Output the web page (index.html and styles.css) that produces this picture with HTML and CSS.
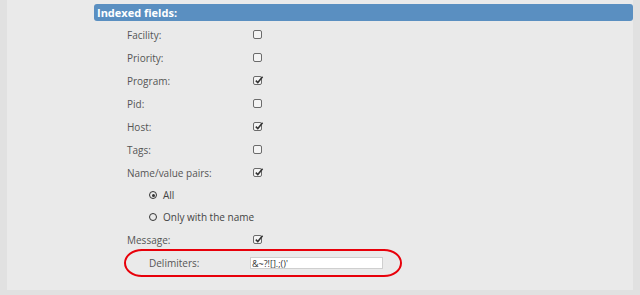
FILE: index.html
```html
<!DOCTYPE html>
<html lang="en">
<head>
    <meta charset="UTF-8">
    <title>Indexed fields</title>
    <link rel="stylesheet" href="styles.css">
</head>
<body>
    <div class="panel">
        <div class="section-title">Indexed fields:</div>

        <div class="fields">
            <div class="field-row">
                <span class="field-label">Facility:</span>
                <span class="check"></span>
            </div>
            <div class="field-row">
                <span class="field-label">Priority:</span>
                <span class="check"></span>
            </div>
            <div class="field-row">
                <span class="field-label">Program:</span>
                <span class="check checked"><svg viewBox="0 0 9 9"><path d="M1.8 4.6 L3.8 6.6 L8.6 0.8" /></svg></span>
            </div>
            <div class="field-row">
                <span class="field-label">Pid:</span>
                <span class="check"></span>
            </div>
            <div class="field-row">
                <span class="field-label">Host:</span>
                <span class="check checked"><svg viewBox="0 0 9 9"><path d="M1.8 4.6 L3.8 6.6 L8.6 0.8" /></svg></span>
            </div>
            <div class="field-row">
                <span class="field-label">Tags:</span>
                <span class="check"></span>
            </div>
            <div class="field-row">
                <span class="field-label">Name/value pairs:</span>
                <span class="check checked"><svg viewBox="0 0 9 9"><path d="M1.8 4.6 L3.8 6.6 L8.6 0.8" /></svg></span>
            </div>
            <div class="radio-row">
                <span class="radio selected"></span>
                <span>All</span>
            </div>
            <div class="radio-row">
                <span class="radio"></span>
                <span>Only with the name</span>
            </div>
            <div class="field-row">
                <span class="field-label">Message:</span>
                <span class="check checked"><svg viewBox="0 0 9 9"><path d="M1.8 4.6 L3.8 6.6 L8.6 0.8" /></svg></span>
            </div>

            <!-- highlighted row -->
            <div class="delimiters">
                <span class="field-label">Delimiters:</span>
                <input class="text-input" type="text" value="&amp;~?![].;()'">
            </div>
        </div>
    </div>
</body>
</html>
```

FILE: styles.css
```css
/* Reset */
* {
    margin: 0;
    padding: 0;
    box-sizing: border-box;
}

body {
    background-color: #e1e1e1;
    font-family: 'Open Sans', sans-serif;
    font-size: 10px;
    color: #555;
}

.panel {
    margin-left: 7px;
    width: 626px;
    height: 290px;
    background-color: #eaeaea;
    padding-top: 4px;
}

/* Blue header bar */
.section-title {
    margin-left: 87px;
    height: 17px;
    line-height: 17px;
    padding-left: 3px;
    background-color: #5a8fc1;
    border-radius: 3px;
    color: #fff;
    font-weight: 700;
    font-size: 11px;
    margin-bottom: 2px;
}

.fields {
    padding-left: 120px;
}

.field-row {
    display: grid;
    grid-template-columns: 126px auto;
    align-items: center;
    height: 23px;
}

/* Checkboxes */
.check {
    display: block;
    width: 9px;
    height: 9px;
    border: 1px solid #6b6b6b;
    border-radius: 2px;
    background-color: #f4f4f4;
    position: relative;
}

.check svg {
    position: absolute;
    left: 0;
    top: -1px;
    width: 9px;
    height: 9px;
    overflow: visible;
}

.check svg path {
    fill: none;
    stroke: #333;
    stroke-width: 1.5;
}

/* Radio options */
.radio-row {
    display: flex;
    align-items: center;
    gap: 6px;
    height: 22px;
    padding-left: 22px;
    color: #444;
}

.radio {
    width: 8px;
    height: 8px;
    border: 1.5px solid #333;
    border-radius: 50%;
    display: flex;
    align-items: center;
    justify-content: center;
}

.radio.selected::after {
    content: '';
    width: 3px;
    height: 3px;
    border-radius: 50%;
    background-color: #333;
}

/* Delimiters row with red marker */
.delimiters {
    display: grid;
    grid-template-columns: 101px auto;
    align-items: center;
    margin-left: -3px;
    margin-top: -2px;
    width: 278px;
    height: 28px;
    padding-left: 23px;
    border: 2px solid #e8000a;
    border-radius: 18px / 14px;
}

.text-input {
    width: 133px;
    height: 12px;
    border: 1px solid #cfcfcf;
    background-color: #fff;
    font-family: 'Open Sans', sans-serif;
    font-size: 9px;
    line-height: 10px;
    color: #333;
    padding: 0 1px;
    outline: none;
}
```
